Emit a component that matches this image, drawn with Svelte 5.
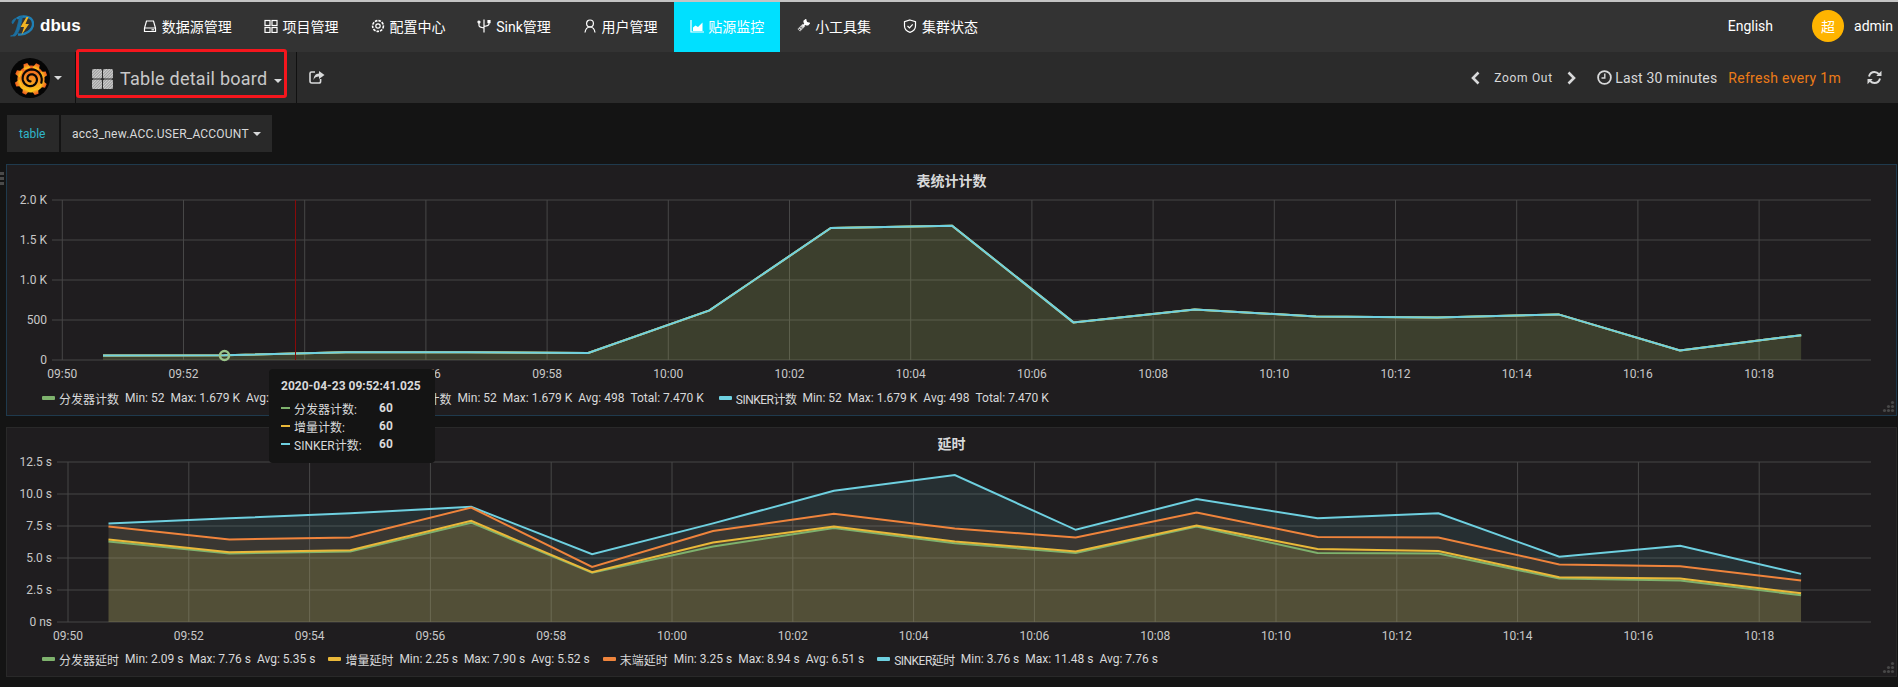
<script>
  const nav = [
    { id: 'drive', label: '数据源管理' },
    { id: 'apps', label: '项目管理' },
    { id: 'gear', label: '配置中心' },
    { id: 'usb', label: 'Sink管理' },
    { id: 'user', label: '用户管理' },
    { id: 'chart', label: '贴源监控', active: true },
    { id: 'tool', label: '小工具集' },
    { id: 'shield', label: '集群状态' }
  ];

  const times = ['09:50','09:52','09:54','09:56','09:58','10:00','10:02','10:04','10:06','10:08','10:10','10:12','10:14','10:16','10:18'];

  function makeChart(cfg) {
    const { top, bottom, x0, dx, px0, pdx, max, ticks, series } = cfg;
    const yOf = (v) => bottom - (v / max) * (bottom - top);
    const xOf = (i) => px0 + pdx * i;
    return {
      ...cfg,
      gridX: times.map((t, i) => ({ t, x: x0 + dx * i })),
      gridY: ticks.map((t) => ({ t: t[0], y: yOf(t[1]) })),
      lines: series.map((s) => {
        const pts = s.data.map((v, i) => `${xOf(i).toFixed(1)},${yOf(v).toFixed(1)}`);
        return {
          color: s.color,
          fo: s.fo ?? 0.1,
          line: pts.join(' '),
          area: `${xOf(0)},${bottom} ${pts.join(' ')} ${xOf(s.data.length - 1).toFixed(1)},${bottom}`
        };
      })
    };
  }

  const count = [56, 60, 98, 98, 88, 620, 1650, 1679, 470, 630, 545, 530, 570, 120, 310];

  const c1 = makeChart({
    viewBox: '7 197 1889 190', left: 52, right: 1871, top: 200, bottom: 360,
    x0: 62.3, dx: 121.2, px0: 103, pdx: 121.3, max: 2000, labelEnd: 47, labelY: 378,
    ticks: [['2.0 K', 2000], ['1.5 K', 1500], ['1.0 K', 1000], ['500', 500], ['0', 0]],
    series: [
      { color: '#7eb26d', data: count },
      { color: '#eab839', data: count },
      { color: '#6ed0e0', data: count, fo: 0.03 }
    ]
  });

  const c2 = makeChart({
    viewBox: '7 460 1889 188', left: 57, right: 1871, top: 462, bottom: 622,
    x0: 68, dx: 120.8, px0: 108.5, pdx: 120.9, max: 12.5, labelEnd: 52, labelY: 640,
    ticks: [['12.5 s', 12.5], ['10.0 s', 10], ['7.5 s', 7.5], ['5.0 s', 5], ['2.5 s', 2.5], ['0 ns', 0]],
    series: [
      { color: '#6ed0e0', data: [7.7, 8.1, 8.5, 9.0, 5.3, 7.7, 10.25, 11.48, 7.2, 9.6, 8.1, 8.5, 5.1, 5.95, 3.76] },
      { color: '#ef843c', data: [7.45, 6.45, 6.6, 8.94, 4.3, 7.1, 8.45, 7.3, 6.6, 8.55, 6.65, 6.6, 4.5, 4.35, 3.25] },
      { color: '#7eb26d', data: [6.3, 5.35, 5.5, 7.76, 3.85, 5.9, 7.35, 6.15, 5.4, 7.45, 5.4, 5.35, 3.4, 3.25, 2.09] },
      { color: '#eab839', data: [6.45, 5.45, 5.6, 7.9, 3.9, 6.2, 7.45, 6.3, 5.5, 7.55, 5.7, 5.55, 3.5, 3.4, 2.25] }
    ]
  });

  const stats1 = ['Min: 52', 'Max: 1.679 K', 'Avg: 498', 'Total: 7.470 K'];
  const legend1 = [
    { c: 'green', name: '分发器计数', stats: stats1 },
    { c: 'yellow', name: '增量计数', stats: stats1 },
    { c: 'cyan', name: 'SINKER计数', narrow: true, stats: stats1 }
  ];
  const legend2 = [
    { c: 'green', name: '分发器延时', stats: ['Min: 2.09 s', 'Max: 7.76 s', 'Avg: 5.35 s'] },
    { c: 'yellow', name: '增量延时', stats: ['Min: 2.25 s', 'Max: 7.90 s', 'Avg: 5.52 s'] },
    { c: 'orange', name: '末端延时', stats: ['Min: 3.25 s', 'Max: 8.94 s', 'Avg: 6.51 s'] },
    { c: 'cyan', name: 'SINKER延时', narrow: true, stats: ['Min: 3.76 s', 'Max: 11.48 s', 'Avg: 7.76 s'] }
  ];
  const tip = [
    { c: 'green', name: '分发器计数:' },
    { c: 'yellow', name: '增量计数:' },
    { c: 'cyan', name: 'SINKER计数:' }
  ];
  const gearTeeth = [-20, 25, 70, 115, 160, 205, 250, 295];

  const spiral = (() => {
    const pts = [];
    for (let i = 0; i <= 60; i++) {
      const t = i / 60;
      const a = (20 - t * 640) * Math.PI / 180;
      const r = 11 - 8.6 * t;
      pts.push(`${(21 + r * Math.cos(a)).toFixed(2)},${(21 + r * Math.sin(a)).toFixed(2)}`);
    }
    return pts.join(' ');
  })();
</script>

{#snippet chart(c)}
  <svg class="chart" viewBox={c.viewBox} preserveAspectRatio="none">
    {#each c.gridY as g}
      <line class="grid" x1={c.left} x2={c.right} y1={g.y} y2={g.y} />
      <text class="tick" x={c.labelEnd} y={g.y + 4} text-anchor="end">{g.t}</text>
    {/each}
    {#each c.gridX as g}
      <line class="grid" x1={g.x} x2={g.x} y1={c.top} y2={c.bottom} />
      <text class="tick" x={g.x} y={c.labelY} text-anchor="middle">{g.t}</text>
    {/each}
    {#each c.lines as l}
      <polygon points={l.area} fill={l.color} fill-opacity={l.fo} />
    {/each}
    {#each c.lines as l}
      <polyline points={l.line} fill="none" stroke={l.color} stroke-width="2" stroke-linejoin="miter" />
    {/each}
    {#if c === c1}
      <line x1="295.5" x2="295.5" y1="200" y2="360" stroke="#880a0a" />
      <circle cx="224.5" cy="355.5" r="4.5" fill="none" stroke="#9ac48a" stroke-width="2.5" />
    {/if}
  </svg>
{/snippet}

{#snippet legend(items)}
  <div class="legend">
    {#each items as it}
      <div class="lg-item">
        <i class="swatch {it.c}"></i><span class="lg-name" class:narrow={it.narrow}>{it.name}</span>
        {#each it.stats as s}<span class="lg-stat">{s}</span>{/each}
      </div>
    {/each}
  </div>
{/snippet}

{#snippet corner()}
  <svg class="resize" viewBox="0 0 14 14">
    <circle cx="11.5" cy="2.5" r="1.6" /><circle cx="7.5" cy="6.5" r="1.6" /><circle cx="11.5" cy="6.5" r="1.6" />
    <circle cx="3.5" cy="10.5" r="1.6" /><circle cx="7.5" cy="10.5" r="1.6" /><circle cx="11.5" cy="10.5" r="1.6" />
  </svg>
{/snippet}

<div class="page">
  <header class="topnav">
    <div class="brand">
      <svg class="dbus-logo" viewBox="0 0 24 22">
        <path d="M7 3.5 C11 0.5 22 0 23 8 C23.8 15 15 20.5 8 19.5" fill="none" stroke="#1f7fb5" stroke-width="2.4" />
        <path d="M7 3 C2 4 1 8 3 9 M0.5 21 C5 21 7 14 9.5 2 L12.5 1.5 C10.5 12 8.5 19 5 21 Z" fill="#1c6f9f" stroke="#1c6f9f" stroke-width="0.8" />
        <path d="M16.5 2 L10.5 12 H14 L11.5 20 L19 9 H15.5 L18.5 2 Z" fill="#f0b323" />
      </svg>
      <span class="brand-name">dbus</span>
    </div>
    <nav class="menu">
      {#each nav as n}
        <a class="menu-item" class:active={n.active} href="#top">
          <svg class="mi" viewBox="0 0 14 14" fill="none" stroke="currentColor" stroke-width="1.2">
            {#if n.id === 'drive'}
              <path d="M3.5 2 H10.5 L12.5 9 V12.5 H1.5 V9 Z M1.5 9 H12.5" /><path d="M8.5 10.8 H11" />
            {:else if n.id === 'apps'}
              <rect x="1" y="1.5" width="5" height="5" /><rect x="8" y="1.5" width="5" height="5" /><rect x="1" y="8.5" width="5" height="5" /><rect x="8" y="8.5" width="5" height="5" />
            {:else if n.id === 'gear'}
              <circle cx="7" cy="7" r="5.4" stroke-width="1.6" stroke-dasharray="2.6 1" /><circle cx="7" cy="7" r="2.2" />
            {:else if n.id === 'usb'}
              <path d="M7 0.5 V13.5 M2 4 V6.5 C2 8 3.5 8.5 7 9 M12 3.5 V5 C12 6.5 10.5 7 7 7.5" /><rect x="11" y="1.6" width="2" height="2" fill="currentColor" /><circle cx="2" cy="3" r="1" fill="currentColor" />
            {:else if n.id === 'user'}
              <circle cx="7" cy="4.4" r="3.4" /><path d="M2 13.5 C2.5 10 4.5 8 7 8 C9.5 8 11.5 10 12 13.5" />
            {:else if n.id === 'chart'}
              <path d="M1 1 V13 H14" /><path d="M3 12 V8.5 L5.5 6.5 L8 8 L12.5 3.5 V12 Z" fill="currentColor" stroke="none" />
            {:else if n.id === 'tool'}
              <path d="M2.8 11.2 L8 6 " stroke-width="3.6" stroke="#c9c9c9" /><path d="M8.2 2.2 A3.4 3.4 0 0 0 11.8 5.8 L13 4.4 A3.6 3.6 0 0 1 9.6 1 Z M6.8 7.2 L8.8 5.2" fill="currentColor" stroke-width="1.6" /><path d="M4.5 8 L6 9.5 M2.8 9.8 L4.2 11.2" stroke="#333" stroke-width="0.9" />
            {:else}
              <path d="M7 1 L12.5 2.8 V7 C12.5 10.2 10 12.4 7 13.4 C4 12.4 1.5 10.2 1.5 7 V2.8 Z" /><path d="M4.5 7 L6.5 9 L9.7 5.4" />
            {/if}
          </svg>
          <span>{n.label}</span>
        </a>
      {/each}
    </nav>
    <div class="account">
      <span class="lang">English</span>
      <span class="avatar">超</span>
      <span class="uname">admin</span>
    </div>
  </header>

  <div class="toolbar">
    <div class="gf-menu">
      <svg class="gf-logo" viewBox="0 0 40 40">
        <defs>
          <linearGradient id="gfg" x1="0" y1="0" x2="0" y2="1">
            <stop offset="0" stop-color="#f0571f" />
            <stop offset="0.55" stop-color="#f79420" />
            <stop offset="1" stop-color="#fcd41c" />
          </linearGradient>
        </defs>
        <circle cx="20" cy="20" r="20" fill="#050505" />
        <g fill="url(#gfg)">
          <rect x="6" y="6" width="30" height="30" fill="url(#gfg)" clip-path="circle(13.6px at 15px 15px)" />
        </g>
        {#each gearTeeth as a}
          <path d="M17.6 10 L19 4.6 L23 4.6 L24.4 10 Z" fill="url(#gfg)" transform="rotate({a} 21 21)" />
        {/each}
        <polyline points={spiral} fill="none" stroke="#0b0704" stroke-width="2.2" stroke-linecap="round" />
      </svg>
      <i class="caret"></i>
    </div>
    <div class="dash-title">
      <svg class="dash-icon" viewBox="0 0 21 20">
        <defs>
          <pattern id="hatch" width="2" height="2" patternUnits="userSpaceOnUse" patternTransform="rotate(45)">
            <rect width="2" height="2" fill="#9a9a9a" /><rect width="1" height="2" fill="#d0d0d0" />
          </pattern>
        </defs>
        <rect x="0" y="0" width="10" height="9.5" rx="1.5" fill="url(#hatch)" />
        <rect x="11" y="0" width="10" height="9.5" rx="1.5" fill="url(#hatch)" />
        <rect x="0" y="10.5" width="10" height="9.5" rx="1.5" fill="url(#hatch)" />
        <rect x="11" y="10.5" width="10" height="9.5" rx="1.5" fill="url(#hatch)" />
      </svg>
      <span class="dash-name">Table detail board</span>
      <i class="caret"></i>
      <span class="highlight"></span>
    </div>
    <button class="share" aria-label="share">
      <svg viewBox="0 0 16 14" fill="none" stroke="#d8d9da" stroke-width="1.6">
        <path d="M6 2 H2.5 C1.5 2 1 2.6 1 3.5 V11 C1 12.2 1.6 13 2.8 13 H10 C11 13 11.6 12.3 11.6 11.2 V9" />
        <path d="M10 1 L15.5 5 L10 9 V6.6 C7.5 6.6 5.6 7.5 4.6 10 C4.6 6 6.5 3.6 10 3.4 Z" fill="#d8d9da" stroke="none" />
      </svg>
    </button>
    <div class="time">
      <svg class="chev" viewBox="0 0 9 14" fill="none" stroke="#d8d9da" stroke-width="2.6"><path d="M7.5 1.5 L2 7 L7.5 12.5" /></svg>
      <span class="zoom">Zoom Out</span>
      <svg class="chev" viewBox="0 0 9 14" fill="none" stroke="#d8d9da" stroke-width="2.6"><path d="M1.5 1.5 L7 7 L1.5 12.5" /></svg>
      <span class="range">
        <svg class="clock" viewBox="0 0 15 15" fill="none" stroke="#d8d9da" stroke-width="1.8"><circle cx="7.5" cy="7.5" r="6.4" /><path d="M7.8 3.5 V8 H4.5" stroke-width="1.4" /></svg>
        <span class="range-text">Last 30 minutes</span>
      </span>
      <span class="refresh">Refresh every 1m</span>
      <svg class="sync" viewBox="0 0 15 15" fill="none" stroke="#d8d9da" stroke-width="2">
        <path d="M2 6.5 C2.8 3.6 5 2 7.5 2 C9.5 2 10.9 3 12 4.2" />
        <path d="M13 8.5 C12.2 11.4 10 13 7.5 13 C5.5 13 4.1 12 3 10.8" />
        <path d="M14.5 0.8 V6 H9.3 Z M0.5 14.2 V9 H5.7 Z" fill="#d8d9da" stroke="none" />
      </svg>
    </div>
  </div>

  <div class="vars">
    <span class="var-label">table</span>
    <span class="var-value">acc3_new.ACC.USER_ACCOUNT <i class="caret small"></i></span>
  </div>

  <section class="panel hover">
    <span class="grip"></span>
    <h3>表统计计数</h3>
    {@render chart(c1)}
    {@render legend(legend1)}
    {@render corner()}
    <div class="tooltip">
      <div class="tip-time">2020-04-23 09:52:41.025</div>
      {#each tip as t}
        <div class="tip-row">
          <i class="tip-sw {t.c}"></i><span class="tip-name">{t.name}</span><b>60</b>
        </div>
      {/each}
    </div>
  </section>

  <section class="panel second">
    <h3>延时</h3>
    {@render chart(c2)}
    {@render legend(legend2)}
    {@render corner()}
  </section>
</div>

<style>
  :global(body) {
    margin: 0;
    background: #141414;
    font-family: Roboto, "Noto Sans CJK SC", sans-serif;
    overflow: hidden;
  }
  .page { width: 1898px; height: 687px; overflow: hidden; background: #141414; }

  .topnav {
    height: 50px;
    border-top: 2px solid #c4c4c4;
    background: #333;
    display: flex;
    align-items: stretch;
    color: #fff;
    font-size: 14px;
  }
  .brand { width: 127px; display: flex; align-items: center; padding-left: 10px; box-sizing: border-box; }
  .dbus-logo { width: 24px; height: 22px; margin-top: -2px; }
  .brand-name { margin-left: 6px; font: 700 17px "Liberation Sans", Arial, sans-serif; margin-top: -2px; }
  .menu { display: flex; }
  .menu-item {
    display: flex; align-items: center; gap: 4.8px; padding: 0 16px;
    color: #fff; text-decoration: none;
    font-family: Roboto, "Noto Sans CJK SC", sans-serif;
  }
  .menu-item span { margin-top: -2px; }
  .menu-item.active { background: #00e0ff; }
  .mi { width: 14px; height: 14px; margin-top: -2px; flex: none; }
  .account { margin-left: auto; display: flex; align-items: center; padding-right: 5px; margin-top: -2px; }
  .lang { margin-right: 39px; }
  .avatar {
    width: 32px; height: 32px; border-radius: 50%; background: #ffb400; color: #fff;
    display: flex; align-items: center; justify-content: center; font-size: 14px; margin-right: 10px;
  }

  .toolbar {
    height: 51px; background: #2b2b2b; display: flex; align-items: stretch; color: #d8d9da;
  }
  .gf-menu {
    width: 76px; box-sizing: border-box; display: flex; align-items: center; padding-left: 10px;
    border-right: 1px solid #111;
  }
  .gf-logo { width: 40px; height: 40px; margin-right: 4px; }
  .caret {
    display: inline-block; width: 0; height: 0; border: 4px solid transparent; border-top-color: #d8d9da;
    border-bottom-width: 0;
  }
  .caret.small { border-width: 4px 4px 0; vertical-align: 2px; }
  .dash-title {
    position: relative; width: 220px; margin-left: 1px; box-sizing: border-box;
    display: flex; align-items: center; padding-left: 15px; border-right: 1px solid #111;
  }
  .dash-icon { width: 21px; height: 20px; margin-top: 2px; }
  .dash-name { margin-left: 7px; font-size: 18px; letter-spacing: 0.25px; color: #c8c8c8; margin-top: 2px; white-space: nowrap; }
  .dash-title .caret { margin-left: 7px; margin-top: 7px; }
  .highlight {
    position: absolute; left: -1px; top: -3px; width: 211px; height: 49px; box-sizing: border-box;
    border: 3px solid #f5161d; border-radius: 3px;
  }
  .share { background: none; border: 0; padding: 0 0 0 12px; display: flex; align-items: center; }
  .share svg { width: 16px; height: 14px; margin-top: -2px; }
  .time { margin-left: auto; display: flex; align-items: center; padding-right: 16px; font-size: 14px; }
  .chev { width: 9px; height: 14px; }
  .zoom { font-size: 12px; letter-spacing: 0.7px; margin: 0 14.5px; }
  .range { display: flex; align-items: center; gap: 3px; margin-left: 21px; }
  .range-text { letter-spacing: 0.13px; }
  .clock { width: 15px; height: 15px; }
  .refresh { color: #eb7b18; margin-left: 11px; letter-spacing: 0.3px; }
  .sync { width: 15px; height: 15px; margin-left: 26px; }

  .vars { height: 61px; box-sizing: border-box; padding: 12px 0 12px 7px; display: flex; gap: 2px; font-size: 12px; }
  .var-label, .var-value {
    height: 37px; background: #292929; display: flex; align-items: center; box-sizing: border-box;
  }
  .var-label { width: 52px; padding-left: 12px; color: #30b6c9; }
  .var-value { width: 211px; padding-left: 11px; color: #d8d9da; gap: 4px; letter-spacing: 0.2px; }

  .panel {
    position: relative; margin: 0 1px 0 6px; background: #1f1d1f;
    border: 1px solid #292929; box-sizing: border-box;
  }
  .panel.hover { height: 252px; border-color: #1f3a4d; z-index: 2; }
  .panel.second { margin-top: 11px; height: 250px; }
  .panel h3 {
    margin: 0; height: 32px; line-height: 32px; text-align: center; font-size: 14px; font-weight: 700;
    color: #d8d9da; font-family: Roboto, "Noto Sans CJK SC", sans-serif;
  }
  .grip {
    position: absolute; left: -7px; top: 7px; width: 4px; height: 13px;
    background: repeating-linear-gradient(#4a4a4a 0 3px, transparent 3px 5px);
  }
  .chart { display: block; width: 1889px; overflow: visible; }
  .hover .chart { height: 190px; }
  .second .chart { height: 188px; }
  .chart text { font: 12px Roboto, sans-serif; fill: #c8c8c8; }
  .grid { stroke: #474747; stroke-width: 1; }

  .legend { display: flex; padding-left: 35px; height: 22px; align-items: center; color: #d8d9da; font-size: 12px; white-space: nowrap; }
  .lg-item { display: flex; align-items: center; }
  .hover .lg-item { margin-right: 15px; }
  .second .lg-item { margin-right: 13px; }
  .swatch { width: 13px; height: 4px; border-radius: 1px; margin-right: 4px; }
  .lg-name.narrow { letter-spacing: -0.5px; }
  .lg-stat { margin-left: 6px; }
  .green { background: #7eb26d; }
  .yellow { background: #eab839; }
  .cyan { background: #6ed0e0; }
  .orange { background: #ef843c; }

  .resize { position: absolute; right: 1px; bottom: 1px; width: 14px; height: 14px; fill: #484848; }

  .tooltip {
    position: absolute; left: 262px; top: 204px; width: 166px; height: 94px; box-sizing: border-box;
    background: #141414; border-radius: 4px; padding: 10px 12px; color: #d8d9da; font-size: 12px;
  }
  .tip-time { font-weight: 700; line-height: 14px; margin-bottom: 6px; white-space: nowrap; }
  .tip-row { display: flex; align-items: center; height: 18px; }
  .tip-sw { width: 9px; height: 2.5px; margin-right: 4px; }
  .tip-name { width: 85px; }
  .tip-row b { font-weight: 700; }
</style>
